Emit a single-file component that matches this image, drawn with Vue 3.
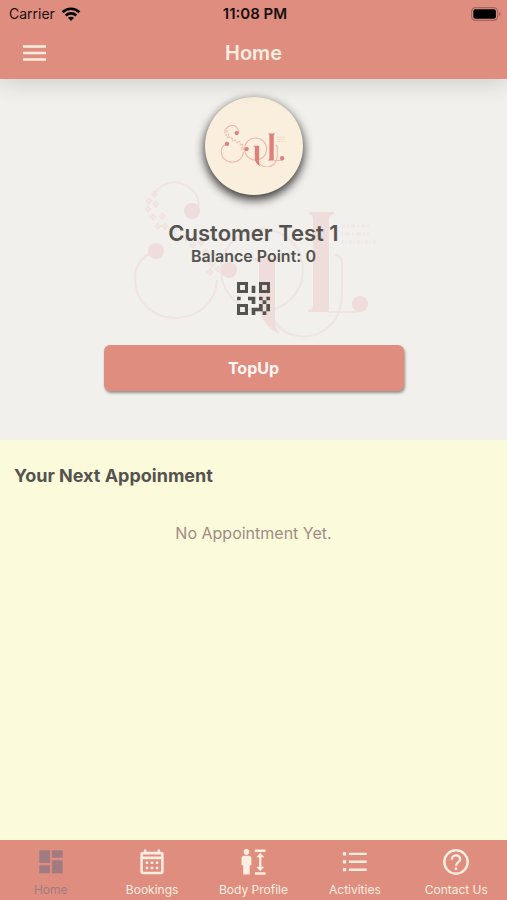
<script setup>
const balance = 0
const florets = [
  [20, 13], [15, 20], [22, 23], [14, 28], [19, 36], [28, 35], [24, 45], [31, 45], [40, 49],
  [43, 57], [52, 57], [59, 64], [67, 62], [72, 71], [79, 73], [78, 83], [84, 88], [76, 91]
]
const tabs = [
  { id: 'home', label: 'Home' },
  { id: 'bookings', label: 'Bookings' },
  { id: 'body', label: 'Body Profile' },
  { id: 'activities', label: 'Activities' },
  { id: 'contact', label: 'Contact Us' }
]
</script>

<template>
  <div class="app">
    <svg class="defs" width="0" height="0" aria-hidden="true">
      <symbol id="soul-logo" viewBox="0 0 244 157">
        <g fill="none" stroke="currentColor" class="hairlines">
          <path d="M20 13C29 0 45-2 56 7C66 15 67 25 60 31" />
          <path d="M22 70C9 74 1 84 1 97C1 121 19 137 41 137C65 137 82 120 83 99" />
          <circle cx="128" cy="89" r="41" />
          <path d="M140 139C151 158 176 160 192 148C204 139 208 128 208 108V83C208 77 205 74 201 74" />
          <path d="M195 131H219C226 131 230 127 230 122" />
        </g>
        <g fill="currentColor">
          <circle cx="58" cy="30" r="8" />
          <circle cx="22" cy="70" r="8" />
          <circle cx="95" cy="89" r="8" />
          <circle cx="226" cy="123" r="8" />
          <path d="M119 77H141V140C141 145 143 149 146 153C133 147 125 137 125 122V81Q125 79 119 79Z" />
          <path d="M175 31H200V33Q195 34 195 38V131H174V129Q179 129 179 124V38Q179 34 175 33Z" />
          <g v-for="([x, y], i) in florets" :key="i" class="floret">
            <circle :cx="x - 2" :cy="y" r="1.5" />
            <circle :cx="x + 2" :cy="y" r="1.5" />
            <circle :cx="x" :cy="y + 2" r="1.5" />
            <circle :cx="x" :cy="y - 2" r="1.5" />
          </g>
        </g>
        <g fill="none" stroke="currentColor" class="tagline">
          <path d="M207 45H237" stroke-dasharray="4 2 2 2" />
          <path d="M207 53H235" stroke-dasharray="2 2 5 2" />
          <path d="M207 61H243" stroke-dasharray="3 2 1 2" />
        </g>
      </symbol>
    </svg>

    <header class="top">
      <div class="status">
        <div class="carrier">
          <span>Carrier</span>
          <svg width="20" height="14" viewBox="0 0 20 14" aria-hidden="true">
            <g fill="none" stroke="#000" stroke-width="2.6">
              <path d="M1.5 5.2C6.3.5 13.7.5 18.5 5.2" />
              <path d="M4.7 8.5C7.7 5.7 12.3 5.7 15.3 8.5" />
            </g>
            <path d="M10 14L6.9 10.8C8.7 9.3 11.3 9.3 13.1 10.8Z" />
          </svg>
        </div>
        <time class="clock">11:08 PM</time>
        <svg class="battery" width="30" height="14" viewBox="0 0 30 14" aria-hidden="true">
          <rect x=".6" y=".6" width="26" height="12.8" rx="4" fill="none" stroke="#a3685e" stroke-width="1.2" />
          <rect x="2.3" y="2.3" width="22.6" height="9.4" rx="2.2" />
          <path d="M28 5V9Q29.6 8.5 29.6 7T28 5Z" fill="#a3685e" />
        </svg>
      </div>
      <div class="bar">
        <button class="menu" type="button" aria-label="Menu">
          <svg width="24" height="16" viewBox="0 0 24 16" aria-hidden="true">
            <path d="M1 1.5H24M1 8H24M1 14.5H24" stroke="currentColor" stroke-width="2.4" />
          </svg>
        </button>
        <h1>Home</h1>
      </div>
    </header>

    <main>
      <section class="hero">
        <svg class="watermark" viewBox="0 0 244 157" aria-hidden="true"><use href="#soul-logo" /></svg>
        <div class="avatar">
          <svg viewBox="0 0 244 157" role="img" aria-label="Soul"><use href="#soul-logo" /></svg>
        </div>
        <h2>Customer Test 1</h2>
        <p class="balance">Balance Point: {{ balance }}</p>
        <button class="qr" type="button" aria-label="QR code">
          <svg width="33" height="33" viewBox="0 0 27 27" fill="currentColor" aria-hidden="true">
            <path fill-rule="evenodd" d="M0 0H9V9H0ZM2.5 2.5V6.5H6.5V2.5ZM18 0H27V9H18ZM20.5 2.5V6.5H24.5V2.5ZM0 18H9V27H0ZM2.5 20.5V24.5H6.5V20.5Z" />
            <path d="M12 3H15V9H12ZM0 12H3V15H0ZM9 12H15V18H12V15H9ZM18 12H21V15H18ZM24 12H27V15H24ZM21 15H24V18H21ZM18 18H21V24H15V27H12V21H18ZM24 18H27V24H24ZM21 24H24V27H21Z" />
          </svg>
        </button>
        <button class="topup" type="button">TopUp</button>
      </section>

      <section class="next">
        <h3>Your Next Appoinment</h3>
        <p>No Appointment Yet.</p>
      </section>
    </main>

    <nav class="tabs">
      <a v-for="tab in tabs" :key="tab.id" :href="'#' + tab.id" :class="{ active: tab.id === 'home' }">
        <svg width="30" height="30" viewBox="0 0 30 30" fill="currentColor" aria-hidden="true">
          <path v-if="tab.id === 'home'" d="M2.5 2.5H14V16H2.5ZM16 2.5H27.5V10.5H16ZM2.5 18.5H14V27H2.5ZM16 13H27.5V27H16Z" />
          <template v-else-if="tab.id === 'bookings'">
            <path fill-rule="evenodd" d="M6.5 1.5H9V4H21V1.5H23.5V4H25Q27.5 4 27.5 6.5V25.5Q27.5 28 25 28H5Q2.5 28 2.5 25.5V6.5Q2.5 4 5 4H6.5ZM5.2 7V9H24.8V7ZM5.2 12V25.4H24.8V12Z" />
            <path d="M8.2 14.5H11V17.2H8.2ZM13.6 14.5H16.4V17.2H13.6ZM19 14.5H21.8V17.2H19ZM8.2 20H11V22.7H8.2ZM13.6 20H16.4V22.7H13.6ZM19 20H21.8V22.7H19Z" />
          </template>
          <template v-else-if="tab.id === 'body'">
            <circle cx="8" cy="4.2" r="3" />
            <path d="M5.5 8.2H10.5Q13.3 8.2 13.3 11V18.5H11.5V28.5H4.5V18.5H2.7V11Q2.7 8.2 5.5 8.2Z" />
            <path d="M17 1.5H28.5V4.2H17ZM17 26H28.5V28.7H17ZM22.7 5L27 10H24V20H27L22.7 25L18.5 20H21.5V10H18.5Z" />
          </template>
          <path v-else-if="tab.id === 'activities'" d="M2 4.5H5.5V8H2ZM8.5 5H27.5V7.6H8.5ZM2 13H5.5V16.5H2ZM8.5 13.5H27.5V16.1H8.5ZM2 21.5H5.5V25H2ZM8.5 22H27.5V24.6H8.5Z" />
          <template v-else>
            <circle cx="15" cy="15" r="12.5" fill="none" stroke="currentColor" stroke-width="2.6" />
            <path d="M10.6 12.5C10.6 6.4 19.4 6.4 19.4 12C19.4 15 15 15.3 15 19" fill="none" stroke="currentColor" stroke-width="2.5" />
            <path d="M13.7 20.8H16.3V23.5H13.7Z" />
          </template>
        </svg>
        <span>{{ tab.label }}</span>
      </a>
    </nav>
  </div>
</template>

<style>
body {
  margin: 0;
}
</style>

<style scoped>
.app {
  display: flex;
  flex-direction: column;
  min-height: 100vh;
  font-family: Inter, "Liberation Sans", sans-serif;
  color: #555350;
  background: #fbfbdb;
}
.defs {
  position: absolute;
}
.hairlines {
  stroke-width: var(--hairline);
  opacity: var(--hairline-opacity);
}
.floret {
  opacity: 0.7;
}
.tagline {
  stroke-width: 3;
  opacity: 0.35;
}
h1, h2, h3, p {
  margin: 0;
}
button {
  font: inherit;
  border: 0;
  padding: 0;
  background: none;
  color: inherit;
  cursor: pointer;
}
svg {
  display: block;
}
.top {
  position: relative;
  z-index: 1;
  background: #df8d7f;
  box-shadow: 0 4px 20px rgba(60, 70, 70, 0.2);
}
.status {
  display: grid;
  grid-template-columns: 1fr auto 1fr;
  align-items: center;
  height: 27px;
  padding: 0 6px 0 9px;
  color: #17100e;
  font-size: 14px;
}
.carrier {
  display: flex;
  align-items: center;
  gap: 6px;
}
.clock {
  font-size: 15px;
  font-weight: 600;
}
.battery {
  justify-self: end;
}
.bar {
  display: grid;
  grid-template-columns: 48px 1fr 48px;
  align-items: center;
  height: 52px;
  padding: 0 10px;
  color: #fdeee0;
}
.menu {
  display: grid;
  place-items: center;
  height: 48px;
}
h1 {
  text-align: center;
  font-size: 20px;
  font-weight: 600;
}
main {
  flex: 1;
}
.hero {
  position: relative;
  display: flex;
  flex-direction: column;
  align-items: center;
  padding: 18px 24px 49px;
  background: #f2f0ec;
}
.hero > * {
  position: relative;
}
.hero > .watermark {
  --hairline: 2;
  --hairline-opacity: 0.6;
  position: absolute;
  top: 102px;
  left: calc(50% - 120px);
  width: 244px;
  color: #eedddb;
}
.avatar {
  --hairline: 4;
  --hairline-opacity: 0.5;
  display: grid;
  place-items: center;
  width: 98px;
  height: 98px;
  border-radius: 50%;
  color: #df7e7a;
  background: #faefdc;
  box-shadow: 0 4px 10px 1px rgba(0, 0, 0, 0.75);
}
.avatar svg {
  width: 66px;
}
h2 {
  margin-top: 24px;
  font-size: 22px;
  line-height: 28px;
  font-weight: 600;
}
.balance {
  font-size: 16px;
  line-height: 18px;
  font-weight: 600;
}
.qr {
  margin-top: 17px;
}
.topup {
  width: 100%;
  max-width: 300px;
  height: 46px;
  margin-top: 30px;
  border-radius: 6px;
  background: #df8d7f;
  color: #fff6f1;
  font-size: 16px;
  font-weight: 700;
  box-shadow: 1px 2px 3px rgba(0, 0, 0, 0.4);
}
.next {
  padding: 24px 14px;
}
h3 {
  font-size: 18px;
  line-height: 24px;
  font-weight: 700;
}
.next p {
  margin-top: 34px;
  text-align: center;
  font-size: 16px;
  line-height: 22px;
  color: #a38a83;
}
.tabs {
  display: grid;
  grid-template-columns: repeat(5, 1fr);
  height: 60px;
  background: #df8d7f;
}
.tabs a {
  display: flex;
  flex-direction: column;
  align-items: center;
  gap: 6px;
  padding-top: 8px;
  color: #fdeee0;
  font-size: 12px;
  line-height: 15px;
  text-decoration: none;
  white-space: nowrap;
}
.tabs svg {
  width: 28px;
  height: 28px;
}
.tabs .active {
  color: #a17b80;
}
</style>
